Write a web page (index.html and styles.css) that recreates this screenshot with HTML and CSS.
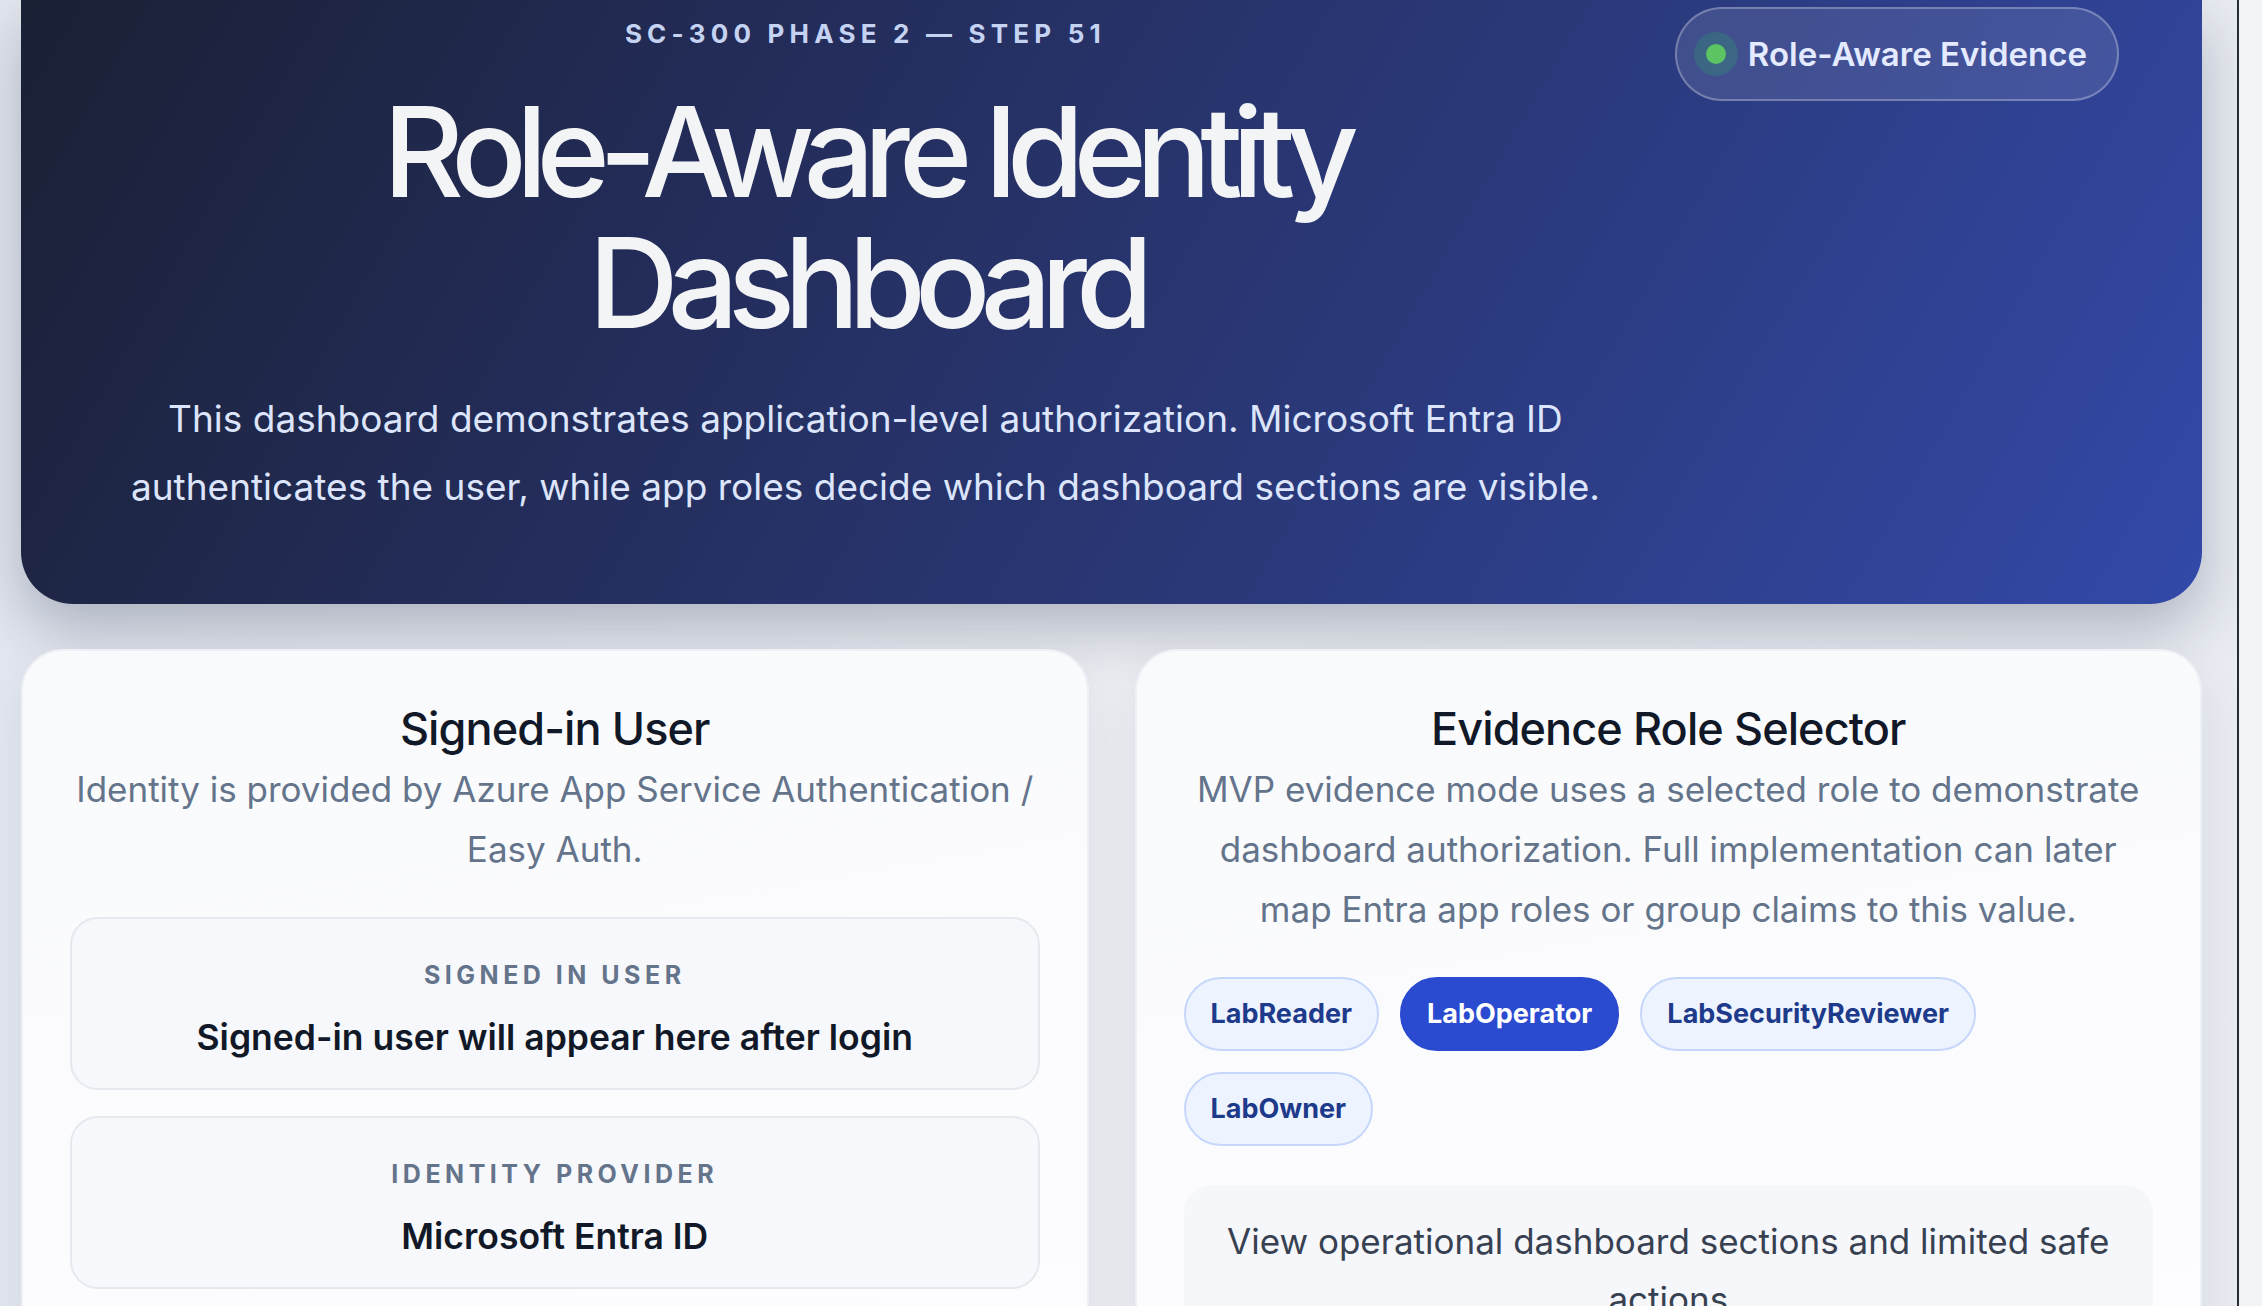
FILE: index.html
```html
<!DOCTYPE html>
<html lang="en">
<head>
<meta charset="utf-8">
<title>Role-Aware Identity Dashboard</title>
<link rel="stylesheet" href="styles.css">
</head>
<body>
<div class="page">
  <header class="hero">
    <div class="hero-text">
      <div class="eyebrow">SC-300 PHASE 2 — STEP 51</div>
      <h1 class="hero-title">Role-Aware Identity Dashboard</h1>
      <p class="hero-lead">This dashboard demonstrates application-level authorization. Microsoft Entra ID authenticates the user, while app roles decide which dashboard sections are visible.</p>
    </div>
    <div class="badge"><span class="badge-dot"></span>Role-Aware Evidence</div>
  </header>

  <main class="cards">
    <section class="card">
      <h2 class="card-title">Signed-in User</h2>
      <p class="card-sub">Identity is provided by Azure App Service Authentication / Easy Auth.</p>
      <div class="info-box">
        <div class="info-label">SIGNED IN USER</div>
        <div class="info-value">Signed-in user will appear here after login</div>
      </div>
      <div class="info-box">
        <div class="info-label">IDENTITY PROVIDER</div>
        <div class="info-value">Microsoft Entra ID</div>
      </div>
    </section>

    <section class="card">
      <h2 class="card-title">Evidence Role Selector</h2>
      <p class="card-sub">MVP evidence mode uses a selected role to demonstrate dashboard authorization. Full implementation can later map Entra app roles or group claims to this value.</p>
      <div class="roles">
        <button class="role">LabReader</button>
        <button class="role role-active">LabOperator</button>
        <button class="role">LabSecurityReviewer</button>
        <button class="role">LabOwner</button>
      </div>
      <div class="role-desc">View operational dashboard sections and limited safe actions</div>
    </section>
  </main>
</div>
<div class="scrollbar"></div>
</body>
</html>
```

FILE: styles.css
```css
* { box-sizing: border-box; }

html, body {
  margin: 0;
  padding: 0;
}

body {
  background: linear-gradient(90deg, #e3e7ef 0%, #eceef3 50%, #e8ebf1 100%);
  font-family: Inter, "Noto Sans", "Liberation Sans", sans-serif;
  color: #111827;
  height: 1306px;
  overflow: hidden;
}

.page {
  width: 2181px;
  margin-left: 21px;
}

.hero {
  display: flex;
  align-items: flex-start;
  gap: 50px;
  padding: 7px 83px 83px 85px;
  border-radius: 0 0 52px 52px;
  background: linear-gradient(120deg, #1a2034 0%, #232c58 30%, #2a3878 60%, #3349a8 100%);
  box-shadow: 0 26px 60px rgba(30, 41, 69, 0.28);
}

.hero-text {
  flex: 1;
  text-align: center;
  padding-top: 9px;
}

.eyebrow {
  font-size: 26px;
  line-height: 36px;
  font-weight: 700;
  letter-spacing: 0.2em;
  color: #c5d3f3;
}

.hero-title {
  margin: 34px 0 0;
  font-size: 125px;
  line-height: 131px;
  font-weight: 500;
  letter-spacing: -0.087em;
  color: #f3f4f6;
  padding: 0 140px;
}

.hero-lead {
  margin: 37px 0 0;
  font-size: 37px;
  line-height: 68px;
  font-weight: 400;
  color: #dce5fb;
}

.badge {
  display: flex;
  align-items: center;
  gap: 22px;
  height: 94px;
  padding: 0 30px 0 29px;
  border-radius: 47px;
  background: rgba(255, 255, 255, 0.1);
  border: 2px solid rgba(255, 255, 255, 0.28);
  font-size: 33px;
  font-weight: 600;
  color: #e4eaff;
  white-space: nowrap;
}

.badge-dot {
  width: 20px;
  height: 20px;
  border-radius: 50%;
  background: #5cc463;
  box-shadow: 0 0 0 12px rgba(34, 197, 94, 0.2);
}

.cards {
  display: grid;
  grid-template-columns: 1fr 1fr;
  gap: 46px;
  margin-top: 45px;
}

.card {
  background: linear-gradient(170deg, #f9fafc 0%, #fdfdff 100%);
  border: 2px solid #eef0f5;
  border-radius: 42px;
  padding: 49px 47px 48px;
  box-shadow: 0 20px 50px rgba(30, 41, 69, 0.08);
  text-align: center;
  height: 760px;
}

.card-title {
  margin: 0 0 1px;
  font-size: 45px;
  line-height: 58px;
  font-weight: 500;
  letter-spacing: -0.02em;
  color: #111827;
}

.card-sub {
  margin: 0 0 38px;
  font-size: 35px;
  line-height: 60px;
  color: #64748b;
}

.info-box {
  background: #f7f8fb;
  border: 2px solid #e5e8ee;
  border-radius: 28px;
  padding: 39px 24px 28px;
  margin-bottom: 26px;
}

.info-label {
  font-size: 25px;
  line-height: 34px;
  font-weight: 700;
  letter-spacing: 0.18em;
  color: #64748b;
}

.info-value {
  margin-top: 24px;
  font-size: 35.5px;
  line-height: 44px;
  font-weight: 600;
  color: #111827;
}

.roles {
  display: flex;
  flex-wrap: wrap;
  gap: 21px;
}

.role {
  font-family: inherit;
  font-size: 27px;
  line-height: 36px;
  font-weight: 700;
  color: #1e3a8a;
  background: #eef4ff;
  border: 2px solid #c7d7fb;
  border-radius: 37px;
  height: 74px;
  padding: 0 25px;
}

.role-active {
  background: #2a4bd0;
  border-color: #2a4bd0;
  color: #ffffff;
}

.role-desc {
  margin-top: 39px;
  background: #f5f7fb;
  border-radius: 28px;
  padding: 27px 30px;
  font-size: 35px;
  line-height: 58px;
  color: #374151;
}

.scrollbar {
  position: fixed;
  top: 0;
  right: 0;
  width: 25px;
  height: 100%;
  background: #f1f3f7;
  border-left: 2px solid #262b36;
}
```
